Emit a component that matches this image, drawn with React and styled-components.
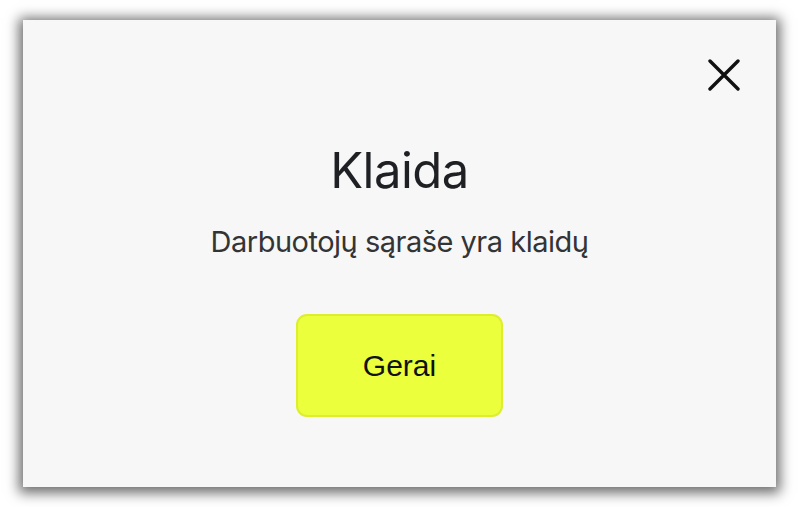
import React from 'react';
import styled, { createGlobalStyle } from 'styled-components';

const GlobalStyle = createGlobalStyle`
  html, body {
    margin: 0;
    padding: 0;
    background: #ffffff;
  }
  body {
    font-family: Inter, "Liberation Sans", Arial, sans-serif;
  }
`;

const Page = styled.div`
  box-sizing: border-box;
  width: 799px;
  height: 507px;
  padding: 20px 23px;
`;

const Dialog = styled.div`
  position: relative;
  box-sizing: border-box;
  height: 467px;
  background: #f7f7f7;
  box-shadow: 0 2px 12px 4px rgba(0, 0, 0, 0.58);
  display: flex;
  flex-direction: column;
  align-items: center;
  padding-top: 121px;
`;

const CloseButton = styled.button`
  position: absolute;
  top: 37px;
  right: 34px;
  width: 36px;
  height: 36px;
  padding: 0;
  border: none;
  background: none;
  cursor: pointer;
  display: flex;
  align-items: center;
  justify-content: center;
`;

const Title = styled.h2`
  margin: 0;
  font-family: Inter, "Liberation Sans", sans-serif;
  font-size: 49px;
  line-height: 60px;
  font-weight: 400;
  letter-spacing: -0.5px;
  color: #1f2023;
`;

const Message = styled.p`
  margin: 23px 0 0;
  font-family: Inter, "Liberation Sans", sans-serif;
  font-size: 29px;
  line-height: 36px;
  font-weight: 400;
  letter-spacing: -0.5px;
  color: #333436;
`;

const OkButton = styled.button`
  margin-top: 54px;
  box-sizing: border-box;
  width: 207px;
  height: 103px;
  border: 2px solid #dcee2c;
  border-radius: 11px;
  background: #ebff3c;
  font-family: "Liberation Sans", Arial, sans-serif;
  font-size: 30px;
  color: #111;
  cursor: pointer;
`;

const CloseIcon = () => (
  <svg width="32" height="32" viewBox="0 0 32 32" fill="none">
    <path d="M2 2 L30 30 M30 2 L2 30" stroke="#111" strokeWidth="3.4" strokeLinecap="round" />
  </svg>
);

export default function App() {
  return (
    <Page>
      <GlobalStyle />
      <Dialog role="dialog">
        <CloseButton aria-label="Uždaryti">
          <CloseIcon />
        </CloseButton>
        <Title>Klaida</Title>
        <Message>Darbuotojų sąraše yra klaidų</Message>
        <OkButton>Gerai</OkButton>
      </Dialog>
    </Page>
  );
}
